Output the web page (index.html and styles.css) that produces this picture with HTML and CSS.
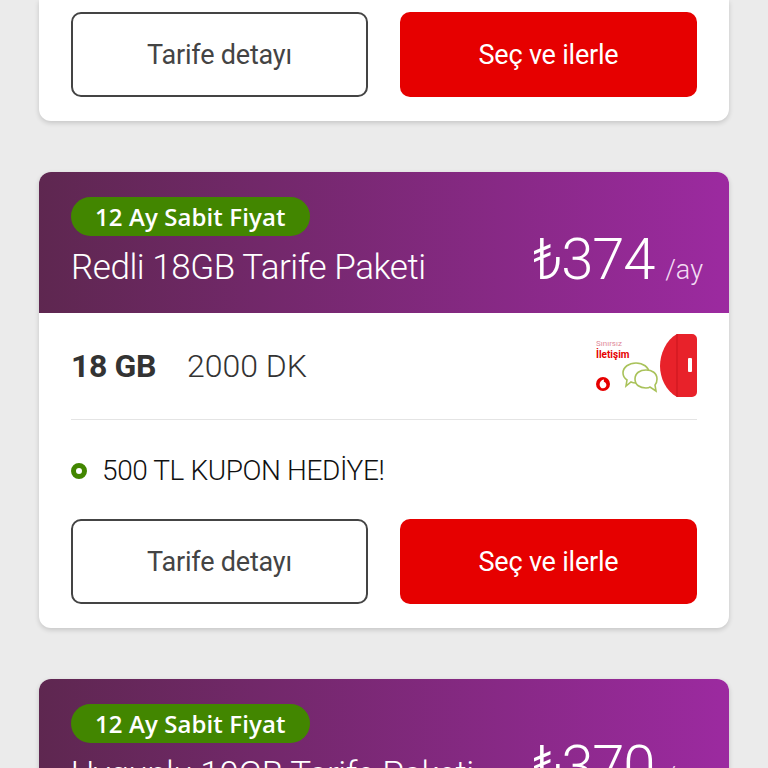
FILE: index.html
```html
<!DOCTYPE html>
<html lang="tr">
<head>
    <meta charset="UTF-8">
    <meta name="viewport" content="width=device-width, initial-scale=1.0">
    <title>Tarife Paketleri</title>
    <link rel="stylesheet" href="styles.css">
</head>
<body>
    <div class="list">
        <div class="card card-cut">
            <div class="actions">
                <button class="btn btn-line">Tarife detayı</button>
                <button class="btn btn-red">Seç ve ilerle</button>
            </div>
        </div>

        <div class="card">
            <div class="head">
                <div class="head-left">
                    <span class="badge">12 Ay Sabit Fiyat</span>
                    <div class="title">Redli 18GB Tarife Paketi</div>
                </div>
                <div class="price"><span class="amount">₺374</span><span class="per">/ay</span></div>
            </div>
            <div class="body">
                <div class="specs">
                    <div class="spec-text"><strong>18 GB</strong><span>2000 DK</span></div>
                    <svg class="promo" width="104" height="66" viewBox="0 0 104 66">
                        <text x="3" y="13" font-size="8" fill="#e08a9a" font-family="Roboto, sans-serif">Sınırsız</text>
                        <text x="3" y="25" font-size="10" font-weight="700" fill="#e60000" font-family="Roboto, sans-serif">İletişim</text>
                        <circle cx="10" cy="51" r="7" fill="#e60000"/>
                        <path d="M11 46.5c-2.6.4-4.4 2.4-4.4 4.9 0 2.4 1.6 3.9 3.5 3.9s3.3-1.4 3.3-3.3c0-1.7-1-2.8-2.6-3.3 0-.9.1-1.6.2-2.2z" fill="#fff"/>
                        <path d="M30 40c0-6 6-10 13-10s13 4 13 10-6 10-13 10c-2 0-3 0-5-1l-5 4 1-6c-3-2-4-4-4-7z" fill="#fff" stroke="#a9c25a" stroke-width="1.6"/>
                        <path d="M64 46c0-6-5-9-11-9s-11 3-11 9 5 9 11 9c1 0 3 0 4-1l6 4-1-6c1-1 2-4 2-6z" fill="#fff" stroke="#a9c25a" stroke-width="1.6"/>
                        <path d="M84 1h15a5 5 0 0 1 5 5v53a5 5 0 0 1-5 5H84C73 58 67 45 67 33S73 7 84 1z" fill="#e8222a"/>
                        <path d="M84 1v63" stroke="#c9141c" stroke-width="1"/>
                        <rect x="95" y="25" width="4" height="14" rx="1" fill="#fff"/>
                    </svg>
                </div>
                <div class="perk"><span class="dot"></span>500 TL KUPON HEDİYE!</div>
                <div class="actions">
                    <button class="btn btn-line">Tarife detayı</button>
                    <button class="btn btn-red">Seç ve ilerle</button>
                </div>
            </div>
        </div>

        <div class="card">
            <div class="head">
                <div class="head-left">
                    <span class="badge">12 Ay Sabit Fiyat</span>
                    <div class="title">Uygunlu 10GB Tarife Paketi</div>
                </div>
                <div class="price"><span class="amount">₺370</span><span class="per">/ay</span></div>
            </div>
        </div>
    </div>
</body>
</html>
```

FILE: styles.css
```css
html, body {
    margin: 0;
    height: 768px;
    overflow: hidden;
    background: #ebebeb;
    font-family: Roboto, "Open Sans", sans-serif;
}

.list {
    display: flex;
    flex-direction: column;
    gap: 51px;
    padding: 0 39px;
}

.card {
    background: #fff;
    border-radius: 12px;
    box-shadow: 0 2px 5px rgba(0, 0, 0, 0.16);
    overflow: hidden;
}

.card-cut {
    padding: 12px 32px 24px;
    border-radius: 0 0 12px 12px;
}

.head {
    height: 141px;
    box-sizing: border-box;
    padding: 25px 26px 0 32px;
    display: flex;
    justify-content: space-between;
    background: linear-gradient(90deg, #5e2750, #9c2aa0);
    color: #fff;
}

.head-left {
    display: flex;
    flex-direction: column;
    align-items: flex-start;
    gap: 10px;
}

.badge {
    height: 39px;
    line-height: 39px;
    padding: 0 24px;
    border-radius: 20px;
    background: #428600;
    font-family: "Open Sans", sans-serif;
    font-size: 24px;
    font-weight: 600;
    letter-spacing: 0.1px;
}

.title {
    font-size: 35px;
    font-weight: 300;
    line-height: 44px;
    letter-spacing: -0.45px;
}

.price {
    display: flex;
    align-items: baseline;
    gap: 11px;
    margin-top: 31px;
}

.amount {
    font-size: 58px;
    font-weight: 300;
    line-height: 62px;
    letter-spacing: -1.2px;
}

.per {
    font-size: 27px;
    font-weight: 300;
    color: #f3dcf3;
}

.body {
    padding: 0 32px 24px;
}

.specs {
    display: flex;
    justify-content: space-between;
    align-items: center;
    height: 106px;
    border-bottom: 1px solid #e4e4e4;
}

.spec-text {
    display: flex;
    gap: 31px;
    font-size: 32px;
    color: #333;
}

.spec-text strong {
    letter-spacing: -0.4px;
}

.spec-text span {
    font-weight: 300;
}

.perk {
    display: flex;
    align-items: center;
    box-sizing: border-box;
    height: 99px;
    padding-top: 2px;
    font-size: 28px;
    font-weight: 300;
    letter-spacing: -0.4px;
    color: #111;
}

.dot {
    box-sizing: border-box;
    width: 16px;
    height: 16px;
    margin-right: 15px;
    border: 5px solid #428600;
    border-radius: 50%;
}

.actions {
    display: grid;
    grid-template-columns: 1fr 1fr;
    gap: 32px;
}

.btn {
    height: 85px;
    border-radius: 10px;
    font-family: inherit;
    font-size: 27px;
    font-weight: 400;
    letter-spacing: -0.2px;
}

.btn-line {
    background: #fff;
    border: 2px solid #444;
    color: #444;
}

.btn-red {
    background: #e60000;
    border: none;
    color: #fff;
}
```
